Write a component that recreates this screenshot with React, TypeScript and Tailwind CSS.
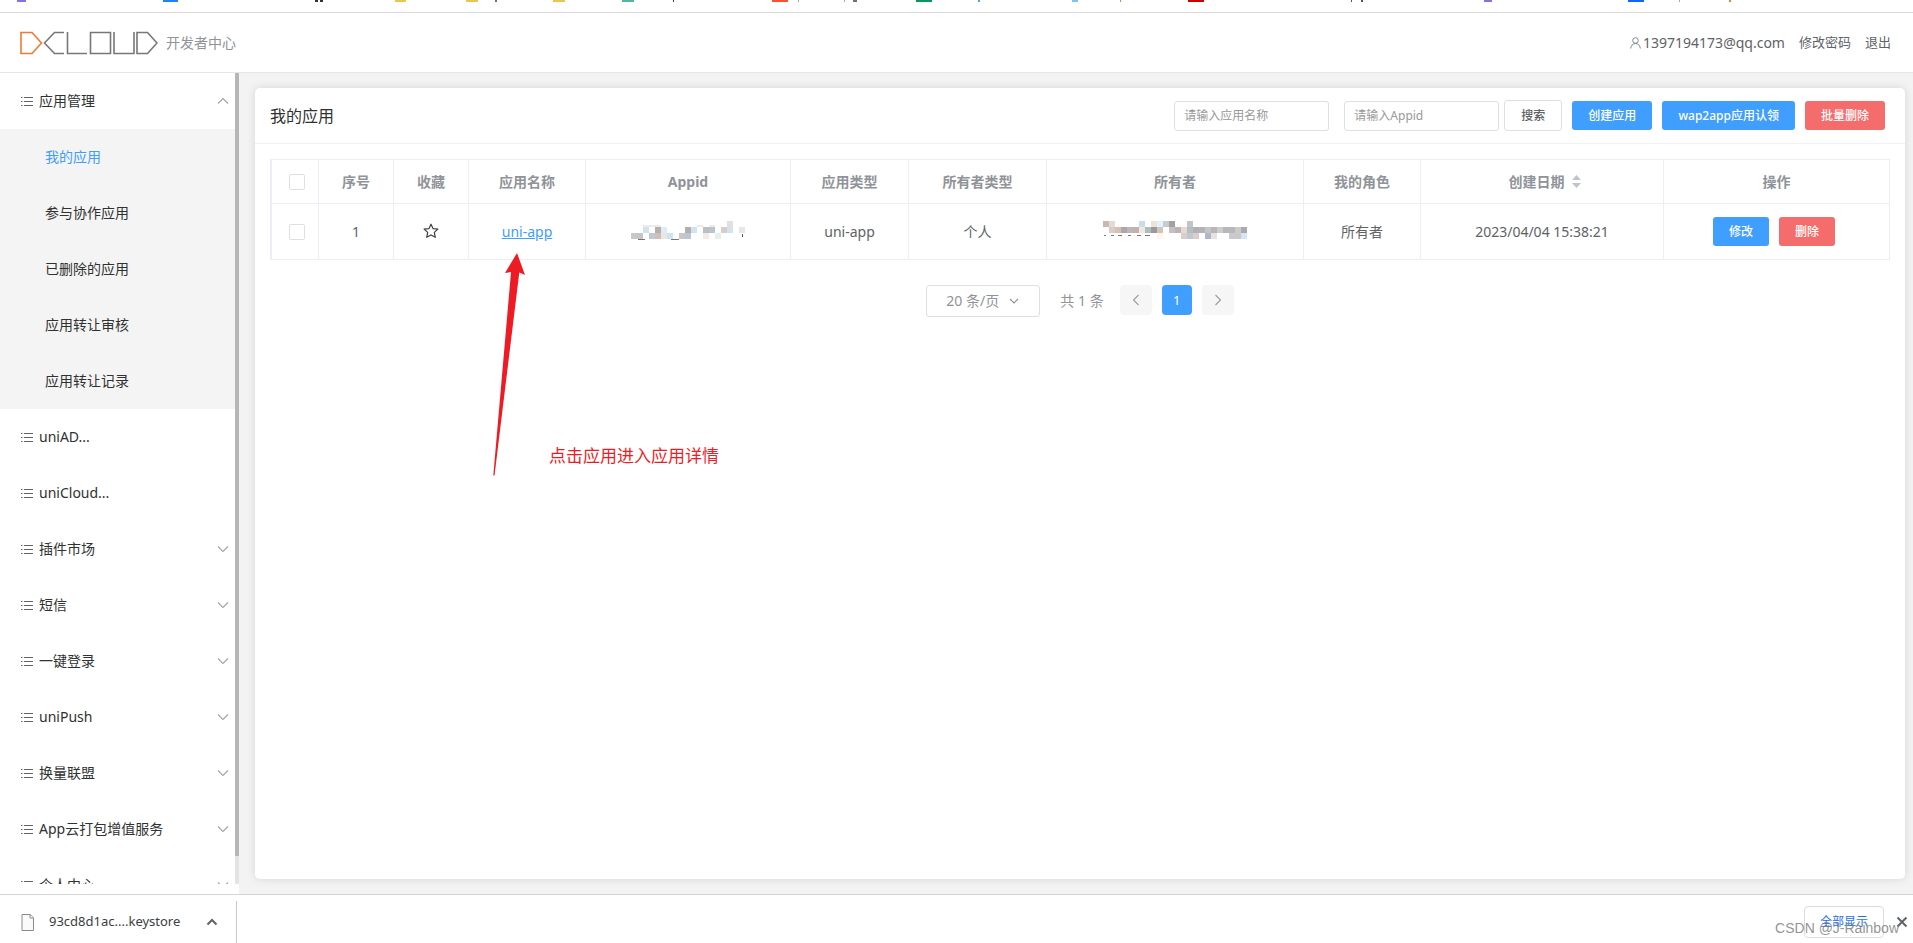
import type { ReactNode } from 'react';

type Block = [number, number, string];

const bookmarks: [number, number, string][] = [
  [17, 9, '#7c74e8'], [163, 15, '#1a86f5'], [315, 3, '#333333'], [320, 3, '#333333'],
  [395, 11, '#eac54f'], [466, 12, '#eac54f'], [495, 2, '#6b7280'], [553, 12, '#eac54f'],
  [622, 12, '#55b3a3'], [673, 1, '#7f1d1d'], [772, 16, '#ff5130'], [798, 1, '#c9a27a'],
  [844, 1, '#c9a27a'], [853, 4, '#6b7280'], [916, 16, '#07995c'], [978, 2, '#60a5c8'],
  [1072, 6, '#7cc4f0'], [1120, 1, '#c98a4a'], [1188, 16, '#cc0000'], [1351, 1, '#555555'],
  [1361, 2, '#555555'], [1484, 8, '#7c74e8'], [1628, 16, '#0a66ff'], [1679, 1, '#c9a27a'],
  [1729, 2, '#c98a4a'],
];

const subItems = ['我的应用', '参与协作应用', '已删除的应用', '应用转让审核', '应用转让记录'];

const menuItems: { label: string; expandable: boolean }[] = [
  { label: 'uniAD...', expandable: false },
  { label: 'uniCloud...', expandable: false },
  { label: '插件市场', expandable: true },
  { label: '短信', expandable: true },
  { label: '一键登录', expandable: true },
  { label: 'uniPush', expandable: true },
  { label: '换量联盟', expandable: true },
  { label: 'App云打包增值服务', expandable: true },
  { label: '个人中心', expandable: true },
];

const appidBlocks: Block[] = [
  [2, 1, '#cfe3f7'], [4, 1, '#b9afaa'], [5, 1, '#dcecf8'], [9, 1, '#b3afad'], [10, 1, '#cfe3f7'],
  [12, 1, '#b9bfc7'], [13, 1, '#bcc3cd'], [15, 1, '#d5cdca'], [16, 1, '#cfe3f7'], [18, 1, '#e7e7ea'],
  [16, 0, '#e6dedb'], [0, 2, '#c8c8ca'], [1, 2, '#c5c6ca'], [3, 2, '#bfc8d4'], [4, 2, '#d0bfb9'],
  [5, 2, '#ece5e1'], [6, 2, '#cfe3f7'], [8, 2, '#c6c6c8'], [9, 2, '#bcc5d1'], [12, 2, '#f3ece6'],
  [14, 2, '#e6eeee'],
];

const ownerBlocks: Block[] = [
  [0, 0, '#cbb9b0'], [1, 0, '#e0dcd9'], [6, 0, '#c9dcf0'], [8, 0, '#ede3da'], [9, 0, '#dff4ff'],
  [10, 0, '#c9cace'], [11, 0, '#a8a09e'], [14, 0, '#c5c3c6'],
  [1, 1, '#dccac3'], [2, 1, '#d3c1b9'], [3, 1, '#b0a5a2'], [4, 1, '#b7b7bd'], [5, 1, '#c5b1a9'],
  [6, 1, '#f0e8dd'], [7, 1, '#b0bcbe'], [8, 1, '#9d989c'], [9, 1, '#d3c3bd'], [11, 1, '#c6bfbe'],
  [12, 1, '#b5b5bb'], [13, 1, '#ead8cb'], [14, 1, '#b3bec3'], [15, 1, '#b1b0b6'], [16, 1, '#b4b4b8'],
  [17, 1, '#c5c5c7'], [18, 1, '#beb3b6'], [19, 1, '#cecbcd'], [20, 1, '#b7b6ba'], [21, 1, '#b7b8be'],
  [22, 1, '#d0cac7'], [23, 1, '#aca9ab'],
  [9, 2, '#fdf7ea'], [13, 2, '#d6cfcd'], [14, 2, '#c0c6d2'], [15, 2, '#dacdca'], [17, 2, '#b0b9c4'],
  [18, 2, '#e2e4e4'], [21, 2, '#cac9cd'], [22, 2, '#ccc7ca'], [23, 2, '#d6e5f5'],
];

function Logo() {
  return (
    <svg width="138" height="24" viewBox="0 0 138 24" fill="none" strokeWidth="1.6" role="img" aria-label="DCLOUD">
      <path d="M1 1.5h11L21.500 12 12 22.500H1z" stroke="#f07a35" />
      <g stroke="#777777">
        <path d="M44 1.500H34.500L24.500 12l10 10.500H44" />
        <path d="M47.500 1v21.500H67" />
        <path d="M70.500 1.500h20v21h-20z" />
        <path d="M94 1v21.500h20V1" />
        <path d="M117 1.500h10.500L137 12l-9.500 10.500H117z" />
      </g>
    </svg>
  );
}

function ListIcon() {
  return (
    <svg className="shrink-0" width="14" height="14" viewBox="0 0 14 14" aria-hidden="true">
      <path d="M4 3.500h9M4 7.500h9M4 11.500h9" stroke="#606266" />
      <path d="M1 3.500h1.500M1 7.500h1.500M1 11.500h1.500" stroke="#606266" />
    </svg>
  );
}

function Chevron({ d, className = '' }: { d: string; className?: string }) {
  return (
    <svg className={className} width="12" height="12" viewBox="0 0 12 12" fill="none" stroke="currentColor" strokeWidth="1.100" aria-hidden="true">
      <path d={d} />
    </svg>
  );
}

const UP = 'M1 8.500L6 3.500l5 5';
const DOWN = 'M1 3.500L6 8.500l5-5';

function Mosaic({ blocks, cols, children, label }: { blocks: Block[]; cols: number; children?: ReactNode; label: string }) {
  return (
    <svg className="mx-auto block" width={cols * 6} height="22" viewBox={`0 0 ${cols * 6} 22`} shapeRendering="crispEdges" role="img" aria-label={label}>
      {blocks.map(([c, r, fill]) => (
        <rect key={`${c}-${r}`} x={c * 6} y={r * 6} width="6" height="6" fill={fill} />
      ))}
      {children}
    </svg>
  );
}

function MiniButton({ children, tone }: { children: ReactNode; tone: 'blue' | 'red' }) {
  const color = tone === 'blue' ? 'bg-[#409eff]' : 'bg-[#f56c6c]';
  return (
    <button type="button" className={`h-[29px] rounded-[3px] px-4 text-xs font-medium whitespace-nowrap text-white ${color}`}>
      {children}
    </button>
  );
}

function Check({ label }: { label: string }) {
  return (
    <input
      type="checkbox"
      aria-label={label}
      className="ml-1 block size-4 appearance-none rounded-[2px] border border-[#dcdfe6] bg-white checked:bg-[#409eff]"
    />
  );
}

function Th({ children }: { children: ReactNode }) {
  return <th className="h-11 border-r border-b border-[#ebeef5] p-0 text-center font-bold text-[#909399]">{children}</th>;
}

function Td({ children }: { children: ReactNode }) {
  return <td className="h-14 border-r border-b border-[#ebeef5] p-0 text-center">{children}</td>;
}

function Sidebar() {
  return (
    <aside className="flex w-[239px] shrink-0 bg-white pb-[10px]">
      <nav className="min-w-0 flex-1 overflow-hidden text-sm text-[#303133]">
        <button type="button" className="flex h-14 w-full items-center gap-[5px] pr-[6px] pl-5">
          <ListIcon />
          <span>应用管理</span>
          <Chevron d={UP} className="ml-auto text-[#a0a3a9]" />
        </button>
        <ul className="bg-[#f4f4f4]">
          {subItems.map((item, i) => (
            <li key={item}>
              <a href="#" className={`flex h-14 items-center pl-[45px] ${i === 0 ? 'text-[#409eff]' : ''}`}>
                {item}
              </a>
            </li>
          ))}
        </ul>
        {menuItems.map(({ label, expandable }) => (
          <button key={label} type="button" className="flex h-14 w-full items-center gap-[5px] pr-[6px] pl-5">
            <ListIcon />
            <span>{label}</span>
            {expandable && <Chevron d={DOWN} className="ml-auto text-[#a0a3a9]" />}
          </button>
        ))}
      </nav>
      <div className="flex w-1 flex-col bg-[#e4e4e4]">
        <div className="h-[783px] max-h-full bg-[#b6b6b6]" />
      </div>
    </aside>
  );
}

function AppTable() {
  return (
    <table className="w-full table-fixed border-separate border-spacing-0 border-t border-l-2 border-[#ebeef5] text-sm text-[#606266]">
      <colgroup>
        <col className="w-[47px]" />
        <col className="w-[75px]" />
        <col className="w-[75px]" />
        <col className="w-[117px]" />
        <col className="w-[205px]" />
        <col className="w-[118px]" />
        <col className="w-[138px]" />
        <col className="w-[257px]" />
        <col className="w-[117px]" />
        <col className="w-[243px]" />
        <col className="w-[226px]" />
      </colgroup>
      <thead>
        <tr>
          <Th><div className="flex justify-center"><Check label="全选" /></div></Th>
          <Th>序号</Th>
          <Th>收藏</Th>
          <Th>应用名称</Th>
          <Th>Appid</Th>
          <Th>应用类型</Th>
          <Th>所有者类型</Th>
          <Th>所有者</Th>
          <Th>我的角色</Th>
          <Th>
            <span className="inline-flex items-center gap-[7px] pl-[5px]">
              创建日期
              <svg width="9" height="13" viewBox="0 0 9 13" fill="#c0c4cc" aria-hidden="true">
                <path d="M4.500 0L9 5H0zM0 8h9l-4.500 5z" />
              </svg>
            </span>
          </Th>
          <Th>操作</Th>
        </tr>
      </thead>
      <tbody>
        <tr>
          <Td><div className="flex justify-center"><Check label="选择 uni-app" /></div></Td>
          <Td>1</Td>
          <Td>
            <button type="button" aria-label="收藏" className="block w-full pb-[2px]">
              <svg className="mx-auto" width="16" height="16" viewBox="0 0 16 16" fill="none" stroke="#3c3f44" strokeWidth="1.200" strokeLinejoin="round">
                <path d="M8 1.200l2 4.400 4.900.5-3.600 3.300 1 4.900L8 11.900l-4.300 2.400 1-4.900L1.100 6.100 6 5.600z" />
              </svg>
            </button>
          </Td>
          <Td><a href="#" className="text-[#409eff] underline">uni-app</a></Td>
          <Td>
            <Mosaic blocks={appidBlocks} cols={19} label="Appid">
              <path d="M12 4h18v2H12zM66 4h6v2h-6zM78 4h6v2h-6z" fill="#f0e9e9" />
              <path d="M7 18h7v1H7zM40 18h8v1h-8z" fill="#777777" />
              <path d="M111 13h1v3h-1z" fill="#555555" />
            </Mosaic>
          </Td>
          <Td>uni-app</Td>
          <Td>个人</Td>
          <Td>
            <Mosaic blocks={ownerBlocks} cols={24} label="所有者">
              <path d="M1 14h2v1H1zM8 14h3v1H8zM15 14h4v1h-4zM25 14h3v1h-3zM34 14h4v1h-4zM42 14h5v1h-5z" fill="#777777" />
            </Mosaic>
          </Td>
          <Td>所有者</Td>
          <Td>2023/04/04 15:38:21</Td>
          <Td>
            <div className="flex justify-center gap-[10px] pr-[5px]">
              <MiniButton tone="blue">修改</MiniButton>
              <MiniButton tone="red">删除</MiniButton>
            </div>
          </Td>
        </tr>
      </tbody>
    </table>
  );
}

const inputClass =
  'h-[30px] w-[155px] rounded-[3px] border border-[#dcdfe6] bg-white px-[9px] text-xs text-[#606266] outline-none placeholder:text-[#999999]';

export default function App() {
  return (
    <div className="flex h-screen flex-col overflow-hidden bg-white font-['Noto_Sans','Noto_Sans_CJK_SC',sans-serif] text-[#606266]">
      <div className="h-[13px] shrink-0 border-b border-[#dadada]">
        <svg className="block w-full" height="2" shapeRendering="crispEdges" aria-hidden="true">
          {bookmarks.map(([x, w, fill]) => (
            <rect key={x} x={x} y="0" width={w} height="2" fill={fill} />
          ))}
        </svg>
      </div>

      <header className="flex h-[60px] shrink-0 items-center border-b border-[#e6e6e6] px-5">
        <Logo />
        <span className="ml-2 text-sm text-[#909399]">开发者中心</span>
        <div className="ml-auto flex items-center gap-[14px] pr-[2px] text-[13px]">
          <span className="flex items-center gap-[2px] text-sm">
            <svg width="11" height="12" viewBox="0 0 11 12" fill="none" stroke="#808389" aria-hidden="true">
              <circle cx="5.500" cy="3.500" r="2.800" />
              <path d="M.7 11.500c.3-3 2-5 4.800-5s4.500 2 4.800 5" />
            </svg>
            1397194173@qq.com
          </span>
          <a href="#">修改密码</a>
          <a href="#">退出</a>
        </div>
      </header>

      <div className="flex min-h-0 flex-1">
        <Sidebar />
        <main className="flex min-w-0 flex-1 bg-[#f3f3f3] pt-[15px] pr-2 pb-[15px] pl-4">
          <section className="relative min-w-0 flex-1 rounded-[5px] bg-white shadow-[0_0_10px_rgba(0,0,0,0.12)]">
            <div className="flex h-14 items-center border-b border-[#f0f1f3] pr-5 pl-[15px]">
              <h1 className="text-base text-[#303133]">我的应用</h1>
              <form className="ml-auto flex items-center" onSubmit={(e) => e.preventDefault()}>
                <input aria-label="应用名称" placeholder="请输入应用名称" className={inputClass} />
                <input aria-label="Appid" placeholder="请输入Appid" className={`ml-[15px] ${inputClass}`} />
                <button type="submit" className="mr-[10px] ml-[5px] h-[31px] rounded-[3px] border border-[#dcdfe6] px-4 text-xs font-medium">
                  搜索
                </button>
                <div className="flex gap-[10px]">
                  <MiniButton tone="blue">创建应用</MiniButton>
                  <MiniButton tone="blue">wap2app应用认领</MiniButton>
                  <MiniButton tone="red">批量删除</MiniButton>
                </div>
              </form>
            </div>

            <div className="p-[15px]">
              <AppTable />
              <div className="mt-[25px] flex items-start justify-center text-sm text-[#909399]">
                <div className="relative flex items-center">
                  <select aria-label="每页条数" className="h-8 w-[114px] appearance-none rounded-[3px] border border-[#dcdfe6] bg-white pl-[19px] outline-none">
                    <option>20 条/页</option>
                  </select>
                  <Chevron d="M2 4l4 4 4-4" className="pointer-events-none absolute right-5 text-[#909399]" />
                </div>
                <span className="mx-4 flex h-8 items-center pl-1">共 1 条</span>
                <div className="flex gap-[10px]">
                  <button type="button" aria-label="上一页" className="flex h-[30px] w-8 items-center justify-center rounded-[4px] bg-[#f6f6f6] text-[#999ca1]">
                    <Chevron d="M8.500 1L3.500 6l5 5" />
                  </button>
                  <button type="button" className="h-[30px] w-[30px] rounded-[4px] bg-[#409eff] text-[13px] text-white">1</button>
                  <button type="button" aria-label="下一页" className="flex h-[30px] w-8 items-center justify-center rounded-[4px] bg-[#f6f6f6] text-[#999ca1]">
                    <Chevron d="M3.500 1l5 5-5 5" />
                  </button>
                </div>
              </div>
            </div>

            <svg className="absolute top-[165px] left-[238px]" width="34" height="224" viewBox="0 0 34 224" aria-hidden="true">
              <path d="M24 0L32 22 26.300 19.500 1.500 222.500H.3L18 19 12 20z" fill="#ed1c24" />
            </svg>
            <p className="absolute top-[356px] left-[294px] text-[17px] leading-6 text-[#ed1c24]">点击应用进入应用详情</p>
          </section>
        </main>
      </div>

      <footer className="relative flex h-[49px] shrink-0 border-t border-[#d5d5d5] bg-white">
        <div className="mt-[6px] flex w-[237px] items-center border-r border-[#c8c8c8] pr-[18px] pl-[21px] text-[13px] text-[#3c4043]">
          <svg width="14" height="17" viewBox="0 0 14 17" fill="#fafafa" stroke="#8b8b8b" aria-hidden="true">
            <path d="M1 .5h8.500L12.500 4v12.500H1z" />
            <path d="M9 .5V4h3.500" />
          </svg>
          <span className="ml-[14px]">93cd8d1ac....keystore</span>
          <button type="button" aria-label="更多" className="ml-auto text-[#5f6368]">
            <svg width="12" height="12" viewBox="0 0 12 12" fill="none" stroke="currentColor" strokeWidth="2">
              <path d="M1.500 8.500L6 4l4.500 4.500" />
            </svg>
          </button>
        </div>
        <div className="mt-[6px] ml-auto flex items-center gap-3 pr-[5px]">
          <button type="button" className="h-8 w-20 rounded-[4px] border border-[#dadce0] text-xs text-[#1a73e8]">全部显示</button>
          <button type="button" aria-label="关闭" className="text-[#5f6368]">
            <svg width="12" height="12" viewBox="0 0 12 12" stroke="currentColor" strokeWidth="2">
              <path d="M1.500 1.500l9 9M10.500 1.500l-9 9" />
            </svg>
          </button>
        </div>
        <span className="pointer-events-none absolute right-[14px] bottom-[5px] font-['Liberation_Sans','Noto_Sans_CJK_SC',sans-serif] text-sm leading-5 text-[#777777]/80">
          CSDN @J-Rainbow
        </span>
      </footer>
    </div>
  );
}
